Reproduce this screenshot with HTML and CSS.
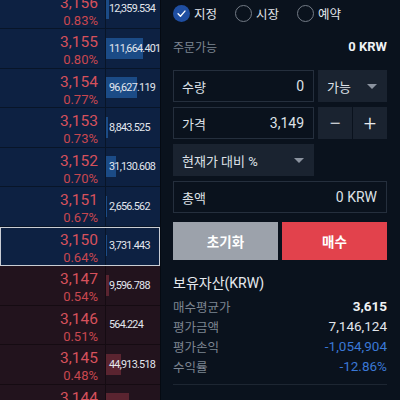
FILE: index.html
```html
<!DOCTYPE html>
<html lang="ko">
  <head>
    <meta charset="UTF-8" />
    <meta name="viewport" content="width=device-width, initial-scale=1.0" />
    <title>주문</title>
    <link rel="stylesheet" href="styles.css">
  </head>
  <body>
    <div class="screen">
      <!-- Order book -->
      <div class="book">
        <div class="rows">
          <div class="row ask">
            <div class="price"><span class="p">3,156</span><span class="pct">0.83%</span></div>
            <div class="vol" style="--w: 3px">12,359.534</div>
          </div>
          <div class="row ask">
            <div class="price"><span class="p">3,155</span><span class="pct">0.80%</span></div>
            <div class="vol" style="--w: 37px">111,664.401</div>
          </div>
          <div class="row ask">
            <div class="price"><span class="p">3,154</span><span class="pct">0.77%</span></div>
            <div class="vol" style="--w: 31px">96,627.119</div>
          </div>
          <div class="row ask">
            <div class="price"><span class="p">3,153</span><span class="pct">0.73%</span></div>
            <div class="vol" style="--w: 2px">8,843.525</div>
          </div>
          <div class="row ask">
            <div class="price"><span class="p">3,152</span><span class="pct">0.70%</span></div>
            <div class="vol" style="--w: 10px">31,130.608</div>
          </div>
          <div class="row ask">
            <div class="price"><span class="p">3,151</span><span class="pct">0.67%</span></div>
            <div class="vol" style="--w: 1px">2,656.562</div>
          </div>
          <div class="row ask selected">
            <div class="price"><span class="p">3,150</span><span class="pct">0.64%</span></div>
            <div class="vol" style="--w: 1px">3,731.443</div>
          </div>
          <div class="row bid">
            <div class="price"><span class="p">3,147</span><span class="pct">0.54%</span></div>
            <div class="vol" style="--w: 3px">9,596.788</div>
          </div>
          <div class="row bid">
            <div class="price"><span class="p">3,146</span><span class="pct">0.51%</span></div>
            <div class="vol" style="--w: 0px">564.224</div>
          </div>
          <div class="row bid">
            <div class="price"><span class="p">3,145</span><span class="pct">0.48%</span></div>
            <div class="vol" style="--w: 15px">44,913.518</div>
          </div>
          <div class="row bid">
            <div class="price"><span class="p">3,144</span><span class="pct">0.45%</span></div>
            <div class="vol" style="--w: 23px"></div>
          </div>
        </div>
      </div>

      <!-- Order form -->
      <div class="order">
        <div class="modes">
          <label class="mode">
            <span class="radio checked">
              <svg viewBox="0 0 16 16" width="11" height="11"><path d="M3 8.5 L6.5 12 L13 4.5" fill="none" stroke="#fff" stroke-width="2" stroke-linecap="round" stroke-linejoin="round"/></svg>
            </span>
            지정
          </label>
          <label class="mode"><span class="radio"></span>시장</label>
          <label class="mode"><span class="radio"></span>예약</label>
        </div>

        <div class="avail">
          <span class="muted label">주문가능</span>
          <span class="strong">0 KRW</span>
        </div>

        <div class="form">
          <div class="field">
            <span class="label">수량</span>
            <span>0</span>
          </div>
          <div class="select">
            <span class="label">가능</span>
            <span class="caret"></span>
          </div>

          <div class="field">
            <span class="label">가격</span>
            <span>3,149</span>
          </div>
          <div class="stepper">
            <button class="step">&minus;</button>
            <button class="step">+</button>
          </div>

          <div class="select">
            <span class="label">현재가 대비 %</span>
            <span class="caret"></span>
          </div>
          <div></div>

          <div class="field wide">
            <span class="label">총액</span>
            <span>0 KRW</span>
          </div>
        </div>

        <div class="actions">
          <button class="reset-btn">초기화</button>
          <button class="buy-btn">매수</button>
        </div>

        <div class="holdings">
          <h3>보유자산(KRW)</h3>
          <div class="line"><span class="muted label">매수평균가</span><span class="strong">3,615</span></div>
          <div class="line"><span class="muted label">평가금액</span><span>7,146,124</span></div>
          <div class="line"><span class="muted label">평가손익</span><span class="down">-1,054,904</span></div>
          <div class="line"><span class="muted label">수익률</span><span class="down">-12.86%</span></div>
        </div>

        <div class="divider"></div>

        <div class="line min">
          <span class="muted label">최소 주문금액</span>
          <span class="muted">5,000 KRW</span>
        </div>
      </div>
    </div>
  </body>
</html>
```

FILE: styles.css
```css
body {
  margin: 0;
  font-family: Roboto, "Noto Sans CJK KR", sans-serif;
  background: #0a121d;
  color: #e2e6ec;
}

.screen {
  display: flex;
  height: 400px;
  overflow: hidden;
}

/* Order book */
.book {
  width: 161px;
  flex-shrink: 0;
  overflow: hidden;
  border-right: 1px solid #050a12;
  box-sizing: border-box;
}

.rows {
  margin-top: -10.5px;
}

.row {
  display: grid;
  grid-template-columns: 106px 1fr;
  height: 39.5px;
  box-sizing: border-box;
  border-bottom: 1px solid #081528;
}

.row.ask {
  background: #0d2142;
}

.row.bid {
  background: #22131d;
  border-bottom-color: #150b12;
}

.row.selected {
  outline: 1.5px solid #c9cdd4;
  outline-offset: -1.5px;
  position: relative;
}

.price {
  display: flex;
  flex-direction: column;
  align-items: flex-end;
  padding: 5px 7px 0 0;
  border-right: 1px solid #081528;
}

.bid .price {
  border-right-color: #150b12;
}

.price .p {
  font-size: 15.5px;
  line-height: 17px;
  color: #d6515c;
}

.price .pct {
  font-size: 13px;
  line-height: 14px;
  margin-top: 2px;
  color: #c8474f;
}

.vol {
  display: flex;
  align-items: center;
  padding-left: 3px;
  font-size: 10.8px;
  color: #e3e7ee;
  letter-spacing: -0.75px;
  white-space: nowrap;
  overflow: hidden;
  background: linear-gradient(#1b4b86, #1b4b86) no-repeat left center;
  background-size: var(--w) 21px;
}

.bid .vol {
  background-image: linear-gradient(#5a2430, #5a2430);
}

/* Order form */
.order {
  flex: 1;
  padding: 0 13px 0 12px;
  font-size: 13px;
}

.label {
  font-size: 13px;
}

.modes {
  display: flex;
  align-items: center;
  height: 26px;
}

.mode {
  display: flex;
  align-items: center;
  gap: 4px;
  width: 62px;
  flex-shrink: 0;
  font-size: 12.5px;
  color: #e2e6ec;
}

.radio {
  width: 17px;
  height: 17px;
  border-radius: 50%;
  box-sizing: border-box;
  border: 1.5px solid #737b86;
  display: flex;
  align-items: center;
  justify-content: center;
}

.radio.checked {
  border: none;
  background: #1f4ea1;
}

.avail {
  display: flex;
  justify-content: space-between;
  align-items: center;
  height: 40px;
}

.avail .label {
  font-size: 12px;
}

.muted {
  color: #7d8591;
}

.strong {
  font-weight: bold;
  color: #f0f2f5;
}

.form {
  display: grid;
  grid-template-columns: 141px 69px;
  grid-auto-rows: 32px;
  column-gap: 4px;
  row-gap: 5px;
  margin-top: 4px;
}

.field {
  display: flex;
  justify-content: space-between;
  align-items: center;
  padding: 0 9px 0 8px;
  border: 1px solid #252f3d;
  font-size: 14px;
  color: #dde1e7;
}

.field.wide {
  grid-column: 1 / 3;
}

.select {
  display: flex;
  justify-content: space-between;
  align-items: center;
  padding: 0 10px 0 9px;
  background: #1a2330;
  font-size: 14px;
  color: #dde1e7;
}

.caret {
  width: 0;
  height: 0;
  border-left: 5px solid transparent;
  border-right: 5px solid transparent;
  border-top: 5px solid #8b939f;
}

.stepper {
  display: flex;
  gap: 1px;
}

.step {
  flex: 1;
  border: none;
  background: #1a2330;
  color: #e8ebef;
  font-family: inherit;
  font-size: 22px;
  font-weight: 300;
  padding: 0;
}

.actions {
  display: flex;
  gap: 4px;
  margin-top: 9px;
}

.actions button {
  flex: 1;
  height: 38px;
  border: none;
  color: #fff;
  font-family: inherit;
  font-size: 13.5px;
  font-weight: bold;
}

.reset-btn {
  background: #9ca2ab;
}

.buy-btn {
  background: #e2424c;
}

.holdings {
  margin-top: 14px;
}

.holdings h3 {
  margin: 0 0 4px;
  font-size: 14px;
  font-weight: normal;
  line-height: 18px;
  color: #e6e9ee;
}

.line {
  display: flex;
  justify-content: space-between;
  align-items: center;
  height: 20px;
  font-size: 13.5px;
}

.line .label {
  font-size: 12.5px;
}

.down {
  color: #3a78d6;
}

.divider {
  height: 1px;
  background: #1d2632;
  margin-top: 8px;
}

.min {
  margin-top: 10px;
}
```
